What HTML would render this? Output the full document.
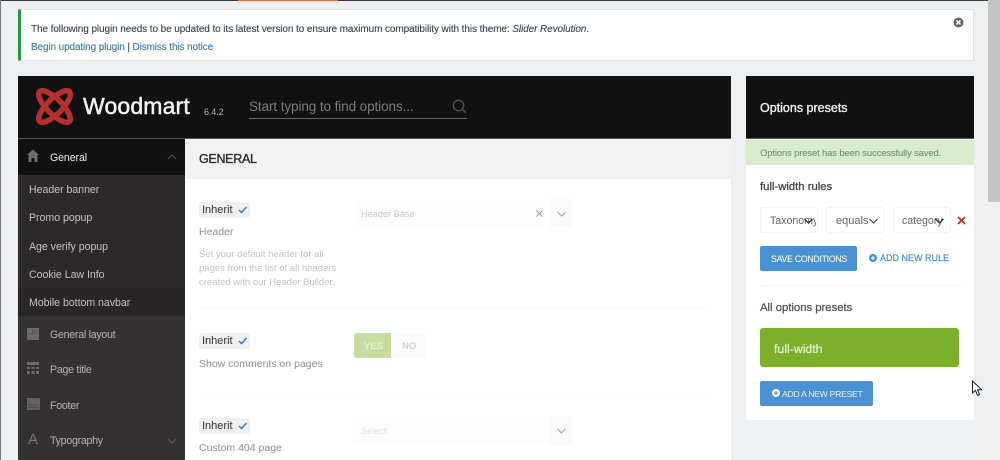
<!DOCTYPE html>
<html lang="en"><head><meta charset="utf-8"><title>Woodmart</title>
<style>
html,body{margin:0;padding:0}
body{width:1000px;height:460px;overflow:hidden;position:relative;background:#eeeff0;font-family:"Liberation Sans",sans-serif;color:#444}
.a{position:absolute;white-space:nowrap}
.box{position:absolute}
.menu{color:#c4c4c4;font-size:10.6px;left:29px;letter-spacing:-.03px}
.main{color:#b4b4b4;font-size:10.6px;left:50px;letter-spacing:-.25px}
.inh{position:absolute;left:199px;width:51px;height:16px;background:#f0f0f1;border-radius:3px;font-size:11px;color:#444;line-height:16px;text-indent:3px;-webkit-text-stroke:.12px #444}
.inh svg{position:absolute;left:38px;top:3px}
.lab{position:absolute;left:199px;font-size:10.5px;color:#9a9a9a;white-space:nowrap;-webkit-text-stroke:.1px #9a9a9a}
.desc{position:absolute;left:199px;font-size:9.5px;color:#c3c3c3;white-space:nowrap}
.sep{position:absolute;left:199px;width:510px;height:2px;background:#fcfcfc}
.sel{position:absolute;background:#fff;border:1px solid #f2f2f2;border-radius:3px;height:24px;font-size:11px;line-height:24px;color:#666;box-sizing:content-box}
</style></head><body>

<div class="box" style="left:0;top:0;width:988px;height:1px;background:#3a3a3c"></div>
<div class="box" style="left:238px;top:0;width:100px;height:1px;background:#e8694a"></div>
<div class="box" style="left:0;top:0;width:1px;height:460px;background:#77777a"></div>
<div class="box" style="left:988px;top:0;width:12px;height:202px;background:#c4c4c4"></div>
<div class="box" style="left:988px;top:202px;width:12px;height:258px;background:#f0f0f1"></div>

<div class="box" style="left:18px;top:9px;width:956px;height:52px;background:#fff;box-sizing:border-box;border:1px solid #e2e2e4;border-left:3px solid #1f9c3c"></div>
<div class="a" style="left:31px;top:24px;font-size:10px;color:#3c434a;letter-spacing:-.09px;-webkit-text-stroke:.12px #3c434a">The following plugin needs to be updated to its latest version to ensure maximum compatibility with this theme: <i>Slider Revolution</i>.</div>
<div class="a" style="left:31px;top:42px;font-size:10px;color:#3f7fb5;letter-spacing:-.12px;-webkit-text-stroke:.15px #3f7fb5">Begin updating plugin <span style="color:#444">|</span> Dismiss this notice</div>
<svg class="box" style="left:953px;top:17px" width="11" height="11" viewBox="0 0 11 11"><circle cx="5.5" cy="5.5" r="5" fill="#666"/><path d="M3.5 3.5l4 4M7.5 3.5l-4 4" stroke="#fff" stroke-width="1.5"/></svg>

<div class="box" style="left:18px;top:76px;width:713px;height:63px;background:#111112;border-bottom:1px solid #555;box-sizing:border-box"></div>
<svg class="box" style="left:35px;top:87px" width="39" height="39" viewBox="0 0 39 39" fill="none" stroke="#b5302f" stroke-width="5.5">
<ellipse cx="19.5" cy="19.5" rx="21" ry="7.5" transform="rotate(45 19.5 19.5)"/>
<ellipse cx="19.5" cy="19.5" rx="21" ry="7.5" transform="rotate(-45 19.5 19.5)"/>
</svg>
<div class="a" style="left:83px;top:93px;font-size:23px;font-weight:400;color:#f2f2f2;-webkit-text-stroke:.5px #f2f2f2;letter-spacing:.15px">Woodmart</div>
<div class="a" style="left:204px;top:107px;font-size:9px;color:#b5b5b5;letter-spacing:-.1px">6.4.2</div>
<div class="a" style="left:249px;top:99px;font-size:13.5px;color:#7d7d7d;letter-spacing:-.09px">Start typing to find options...</div>
<div class="box" style="left:249px;top:118px;width:218px;height:1px;background:#666"></div>
<svg class="box" style="left:452px;top:99px" width="15" height="15" viewBox="0 0 15 15" fill="none" stroke="#555" stroke-width="1.3"><circle cx="6.5" cy="6.5" r="5.2"/><path d="M10.3 10.3l3.6 3.6"/></svg>

<div class="box" style="left:18px;top:139px;width:167px;height:321px;background:#343132"></div>
<div class="box" style="left:18px;top:139px;width:167px;height:36px;background:#111112"></div>
<div class="box" style="left:18px;top:175px;width:167px;height:141px;background:#2b292a"></div>
<div class="box" style="left:18px;top:288px;width:167px;height:28px;background:#282627"></div>

<svg class="box" style="left:27px;top:149px" width="12" height="13" viewBox="0 0 12 13" fill="#6d6d6d"><path d="M6 .5L0 6h1.5v7h3V9h3v4h3V6H12z"/></svg>
<div class="a" style="left:50px;top:152px;font-size:10.6px;color:#ececec;letter-spacing:-.1px">General</div>
<svg class="box" style="left:167px;top:154px" width="10" height="6" viewBox="0 0 10 6" fill="none" stroke="#4a4a4a" stroke-width="1.2"><path d="M1 5l4-4 4 4"/></svg>

<div class="a menu" style="top:184px">Header banner</div>
<div class="a menu" style="top:212px">Promo popup</div>
<div class="a menu" style="top:241px">Age verify popup</div>
<div class="a menu" style="top:269px">Cookie Law Info</div>
<div class="a menu" style="top:297px">Mobile bottom navbar</div>

<svg class="box" style="left:27px;top:328px" width="12" height="12" viewBox="0 0 12 12"><rect width="12" height="12" fill="#6a6a6a"/><path d="M5.5 1v5H1M8 1v5" stroke="#4b4b4b" stroke-width=".8" fill="none"/></svg>
<div class="a main" style="top:329px">General layout</div>
<svg class="box" style="left:27px;top:362px" width="12" height="12" viewBox="0 0 12 12" fill="#6a6a6a"><rect width="12" height="3"/><rect y="5" width="3" height="2"/><rect x="4.5" y="5" width="3" height="2"/><rect x="9" y="5" width="3" height="2"/><rect y="9" width="3" height="3"/><rect x="4.5" y="9" width="3" height="3"/><rect x="9" y="9" width="3" height="3"/></svg>
<div class="a main" style="top:364px">Page title</div>
<svg class="box" style="left:27px;top:398px" width="13" height="12" viewBox="0 0 13 12"><rect width="13" height="12" fill="#626262"/><path d="M1 7h11M1 9.5h11" stroke="#4b4b4b" stroke-width=".7"/></svg>
<div class="a main" style="top:400px">Footer</div>
<div class="a" style="left:28px;top:431px;font-size:15px;color:#7a7a7a">A</div>
<div class="a main" style="top:435px">Typography</div>
<svg class="box" style="left:167px;top:438px" width="10" height="6" viewBox="0 0 10 6" fill="none" stroke="#5a5a5a" stroke-width="1.2"><path d="M1 1l4 4 4-4"/></svg>

<div class="box" style="left:185px;top:139px;width:546px;height:321px;background:#fff"></div>
<div class="box" style="left:185px;top:139px;width:546px;height:40px;background:#f2f2f2"></div>
<div class="a" style="left:199px;top:152px;font-size:12.5px;color:#2a2a2a;-webkit-text-stroke:.35px #2a2a2a;letter-spacing:-.3px">GENERAL</div>

<div class="inh" style="top:202px">Inherit<svg width="11" height="10" viewBox="0 0 11 10" fill="none" stroke="#3d7fb8" stroke-width="1.5"><path d="M2 5l2.5 2.5L9.5 2"/></svg></div>
<div class="lab" style="top:226px">Header</div>
<div class="desc" style="top:249px">Set your default header for all</div>
<div class="desc" style="top:263px">pages from the list of all headers</div>
<div class="desc" style="top:277px">created with our Header Builder.</div>
<div class="sep" style="top:307px"></div>

<div class="box" style="left:354px;top:201px;width:189px;height:27px;background:#fdfdfd"></div>
<div class="a" style="left:361px;top:209px;font-size:9.2px;color:#c8c8c8">Header Base</div>
<svg class="box" style="left:536px;top:210px" width="7" height="7" viewBox="0 0 7 7" stroke="#a0a0a0" stroke-width="1.1"><path d="M.5.5l6 6M6.5.5l-6 6"/></svg>
<div class="box" style="left:550px;top:199px;width:23px;height:28px;background:#fafafa"></div>
<svg class="box" style="left:557px;top:211px" width="9" height="6" viewBox="0 0 9 6" fill="none" stroke="#a5a5a5" stroke-width="1.1"><path d="M.5 1l4 4 4-4"/></svg>

<div class="inh" style="top:333px">Inherit<svg width="11" height="10" viewBox="0 0 11 10" fill="none" stroke="#3d7fb8" stroke-width="1.5"><path d="M2 5l2.5 2.5L9.5 2"/></svg></div>
<div class="lab" style="top:358px">Show comments on pages</div>
<div class="sep" style="top:394px"></div>
<div class="box" style="left:354px;top:333px;width:37px;height:25px;background:#c8dca0;border-radius:3px 0 0 3px"></div>
<div class="a" style="left:364px;top:341px;font-size:9.5px;color:#eef5e0">YES</div>
<div class="box" style="left:391px;top:333px;width:34px;height:25px;background:#fafafa"></div>
<div class="a" style="left:402px;top:341px;font-size:9.5px;color:#c5c5c5">NO</div>

<div class="inh" style="top:418px">Inherit<svg width="11" height="10" viewBox="0 0 11 10" fill="none" stroke="#3d7fb8" stroke-width="1.5"><path d="M2 5l2.5 2.5L9.5 2"/></svg></div>
<div class="lab" style="top:442px">Custom 404 page</div>
<div class="box" style="left:351px;top:416px;width:199px;height:29px;background:#fdfdfd"></div>
<div class="a" style="left:361px;top:426px;font-size:9.2px;color:#dddddd">Select</div>
<div class="box" style="left:550px;top:416px;width:23px;height:29px;background:#fafafa"></div>
<svg class="box" style="left:557px;top:428px" width="9" height="6" viewBox="0 0 9 6" fill="none" stroke="#a5a5a5" stroke-width="1.1"><path d="M.5 1l4 4 4-4"/></svg>

<div class="box" style="left:746px;top:76px;width:228px;height:63px;background:#111112;border-bottom:1px solid #555;box-sizing:border-box"></div>
<div class="a" style="left:760px;top:101px;font-size:12.5px;color:#efefef;-webkit-text-stroke:.35px #efefef">Options presets</div>
<div class="box" style="left:746px;top:139px;width:228px;height:281px;background:#fff"></div>
<div class="box" style="left:746px;top:140px;width:228px;height:25px;background:#d8ebcd"></div>
<div class="a" style="left:760px;top:148px;font-size:9.5px;color:#6a9a68;letter-spacing:-.16px;-webkit-text-stroke:.1px #6a9a68">Options preset has been successfully saved.</div>
<div class="a" style="left:760px;top:181px;font-size:11.3px;color:#444;-webkit-text-stroke:.3px #444">full-width rules</div>

<div class="sel" style="left:760px;top:207px;width:56px"></div>
<div class="a" style="left:770px;top:215px;font-size:10.6px;color:#666;width:46px;overflow:hidden">Taxonomy</div>
<svg class="box" style="left:804px;top:218px" width="9" height="6" viewBox="0 0 9 6" fill="none" stroke="#333" stroke-width="1.3"><path d="M.5 1l4 4 4-4"/></svg>
<div class="sel" style="left:826px;top:207px;width:56px"></div>
<div class="a" style="left:836px;top:215px;font-size:11px;color:#666">equals</div>
<svg class="box" style="left:869px;top:218px" width="9" height="6" viewBox="0 0 9 6" fill="none" stroke="#444" stroke-width="1.2"><path d="M.5 1l4 4 4-4"/></svg>
<div class="sel" style="left:893px;top:207px;width:56px"></div>
<div class="a" style="left:902px;top:215px;font-size:10.6px;color:#666;width:46px;overflow:hidden">category</div>
<svg class="box" style="left:935px;top:218px" width="9" height="6" viewBox="0 0 9 6" fill="none" stroke="#333" stroke-width="1.3"><path d="M.5 1l4 4 4-4"/></svg>
<svg class="box" style="left:957px;top:216px" width="9" height="9" viewBox="0 0 9 9" stroke="#c8322e" stroke-width="1.8"><path d="M1 1l7 7M8 1l-7 7"/></svg>

<div class="box" style="left:760px;top:246px;width:97px;height:25px;background:#4a90d2;border-radius:2px"></div>
<div class="a" style="left:771px;top:254px;font-size:8.8px;color:#f2f7fc;letter-spacing:-.3px;-webkit-text-stroke:.1px #f2f7fc">SAVE CONDITIONS</div>
<svg class="box" style="left:869px;top:254px" width="8" height="8" viewBox="0 0 8 8"><circle cx="4" cy="4" r="4" fill="#4a8fd0"/><path d="M4 2v4M2 4h4" stroke="#fff" stroke-width="1.1"/></svg>
<div class="a" style="left:880px;top:253px;font-size:9px;color:#4a8fd0;-webkit-text-stroke:.2px #4a8fd0">ADD NEW RULE</div>
<div class="box" style="left:762px;top:285px;width:200px;height:1px;background:#f4f4f4"></div>

<div class="a" style="left:760px;top:302px;font-size:11.3px;color:#555;-webkit-text-stroke:.3px #555">All options presets</div>
<div class="box" style="left:760px;top:328px;width:199px;height:39px;background:#7cb02c;border-radius:3px"></div>
<div class="a" style="left:774px;top:342px;font-size:12.3px;color:#e8f3d4;-webkit-text-stroke:.2px #e8f3d4">full-width</div>
<div class="box" style="left:760px;top:381px;width:113px;height:25px;background:#4a90d2;border-radius:2px"></div>
<svg class="box" style="left:772px;top:389px" width="8" height="8" viewBox="0 0 8 8"><circle cx="4" cy="4" r="4" fill="#fff"/><path d="M4 2v4M2 4h4" stroke="#4a90d2" stroke-width="1.1"/></svg>
<div class="a" style="left:782px;top:389px;font-size:8.6px;color:#e8f1fa;letter-spacing:-.25px">ADD A NEW PRESET</div>

<svg class="box" style="left:971px;top:380px" width="11" height="17" viewBox="0 0 11 17"><path d="M1.5 1v12l3-2.7 2 5 2-.8-2-4.8h4z" fill="#fff" stroke="#222" stroke-width="1"/></svg>

</body></html>
